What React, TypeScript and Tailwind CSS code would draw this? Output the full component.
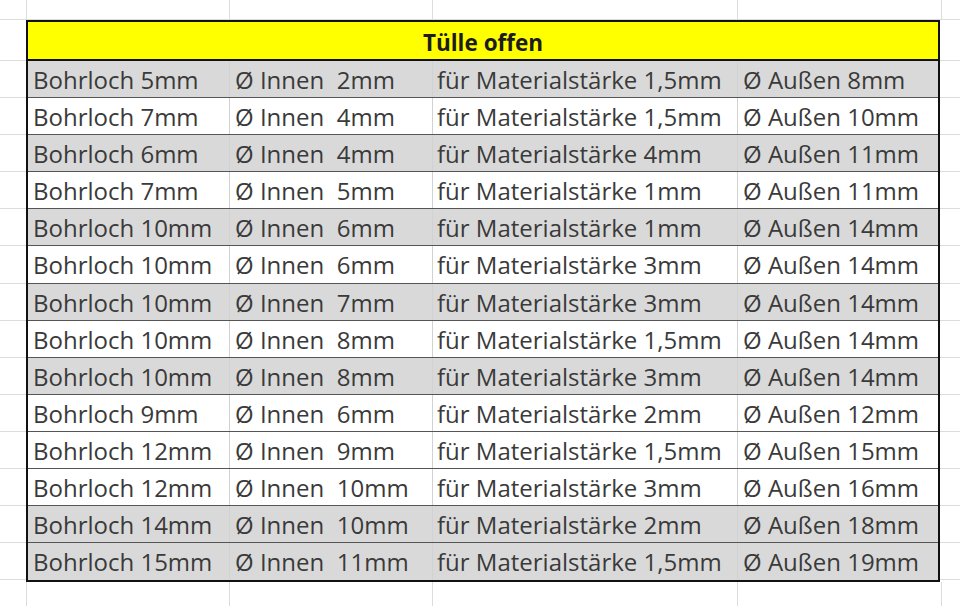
type Row = { bohr: string; innen: string; staerke: string; aussen: string; shaded: boolean };

const rows: Row[] = [
  { bohr: '5mm', innen: '2mm', staerke: '1,5mm', aussen: '8mm', shaded: true },
  { bohr: '7mm', innen: '4mm', staerke: '1,5mm', aussen: '10mm', shaded: false },
  { bohr: '6mm', innen: '4mm', staerke: '4mm', aussen: '11mm', shaded: true },
  { bohr: '7mm', innen: '5mm', staerke: '1mm', aussen: '11mm', shaded: false },
  { bohr: '10mm', innen: '6mm', staerke: '1mm', aussen: '14mm', shaded: true },
  { bohr: '10mm', innen: '6mm', staerke: '3mm', aussen: '14mm', shaded: false },
  { bohr: '10mm', innen: '7mm', staerke: '3mm', aussen: '14mm', shaded: true },
  { bohr: '10mm', innen: '8mm', staerke: '1,5mm', aussen: '14mm', shaded: false },
  { bohr: '10mm', innen: '8mm', staerke: '3mm', aussen: '14mm', shaded: true },
  { bohr: '9mm', innen: '6mm', staerke: '2mm', aussen: '12mm', shaded: false },
  { bohr: '12mm', innen: '9mm', staerke: '1,5mm', aussen: '15mm', shaded: false },
  { bohr: '12mm', innen: '10mm', staerke: '3mm', aussen: '16mm', shaded: false },
  { bohr: '14mm', innen: '10mm', staerke: '2mm', aussen: '18mm', shaded: true },
  { bohr: '15mm', innen: '11mm', staerke: '1,5mm', aussen: '19mm', shaded: true },
];

const font = { fontFamily: '"Open Sans", "Noto Sans", sans-serif' };

// empty spreadsheet row above / below the table
const SheetRow = ({ className }: { className: string }) => (
  <div className={`flex ${className}`}>
    <div className="w-[27px] shrink-0 border-r border-[#dcdcdc]" />
    <div className="w-[203px] shrink-0 border-r border-[#dcdcdc]" />
    <div className="w-[203px] shrink-0 border-r border-[#dcdcdc]" />
    <div className="w-[305px] shrink-0 border-r border-[#dcdcdc]" />
    <div className="w-[204px] shrink-0 border-r border-[#dcdcdc]" />
    <div className="flex-1" />
  </div>
);

const MarginColumn = ({ className }: { className: string }) => (
  <div className={`flex flex-col ${className}`}>
    <div className="h-[41px] border-b border-[#dcdcdc]" />
    {rows.map((_, i) => (
      <div key={i} className="h-[37.1px] border-b border-[#dcdcdc]" />
    ))}
  </div>
);

export default function App() {
  return (
    <div className="w-[960px] h-[606px] overflow-hidden bg-white flex flex-col" style={font}>
      <SheetRow className="h-[20px] shrink-0 border-b border-[#dcdcdc]" />
      <div className="flex shrink-0">
        <MarginColumn className="w-[26px] shrink-0" />
        <div className="w-[914px] shrink-0 border-2 border-[#111]">
          <div className="h-[39px] bg-[#ffff00] border-b-2 border-[#111] flex items-center justify-center pt-[5px]">
            <span className="text-[22.5px] font-bold text-[#1c1c1c] leading-none">Tülle offen</span>
          </div>
          {rows.map((r, i) => (
            <div
              key={i}
              className={`flex h-[37.1px] text-[24px] leading-[38px] text-[#3a3a3a] whitespace-pre ${
                r.shaded ? 'bg-[#d9d9d9]' : 'bg-white'
              } ${i < rows.length - 1 ? 'border-b border-[#555]' : ''}`}
            >
              <div className="w-[201px] shrink-0 pl-[5px]">Bohrloch {r.bohr}</div>
              <div className="w-[203px] shrink-0 pl-[5px] border-l border-[#d2d2d2]">Ø Innen  {r.innen}</div>
              <div className="w-[305px] shrink-0 pl-[4px] border-l border-[#d2d2d2]">für Materialstärke {r.staerke}</div>
              <div className="flex-1 pl-[5px] border-l border-[#d2d2d2]">Ø Außen {r.aussen}</div>
            </div>
          ))}
        </div>
        <MarginColumn className="flex-1" />
      </div>
      <SheetRow className="flex-1" />
    </div>
  );
}
